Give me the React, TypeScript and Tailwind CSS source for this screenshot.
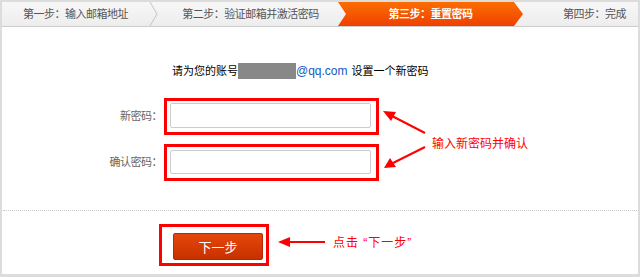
import React from "react";

function Separator() {
  return (
    <svg width="12" height="24" viewBox="0 0 12 24" className="shrink-0">
      <polyline points="1,0 8,12 1,24" fill="none" stroke="#c4c4c4" strokeWidth="1" />
    </svg>
  );
}

export default function App() {
  return (
    <div className="relative w-[640px] h-[277px] bg-[#dcdcdc] pt-[2px] px-[2px] pb-[3px] flex flex-col font-['Liberation_Sans','Noto_Sans_CJK_SC',sans-serif]">
      {/* Step bar */}
      <div className="h-[25px] flex items-stretch bg-gradient-to-b from-[#f7f7f7] to-[#ededed] border-b border-[#cdcdcd] text-[11px] tracking-[-0.5px] text-[#555]">
        <div className="w-[147px] flex items-center justify-center">第一步：输入邮箱地址</div>
        <Separator />
        <div className="w-[177px] flex items-center justify-center pl-[2px]">第二步：验证邮箱并激活密码</div>
        <div className="w-[185px] flex items-center justify-center bg-gradient-to-b from-[#fb6d00] to-[#ef3e00] text-white font-bold [clip-path:polygon(0_0,calc(100%_-_9px)_0,100%_50%,calc(100%_-_9px)_100%,0_100%,8px_50%)]">
          第三步：重置密码
        </div>
        <div className="flex-1 flex items-center pl-[40px]">第四步：完成</div>
      </div>

      {/* Content */}
      <div className="flex-1 bg-white flex flex-col">
        <div className="mt-[36px] pl-[170px] h-[16px] flex items-center text-[11px] text-black">
          <span>请为您的账号</span>
          <span className="inline-block w-[58px] h-[16px] bg-[#888888]" />
          <span className="text-[#1558c0] text-[12px]">@qq.com</span>
          <span className="ml-[4px]">设置一个新密码</span>
        </div>

        <div className="mt-[19px] flex items-center">
          <div className="w-[160px] text-right text-[11px] tracking-[-0.5px] text-[#666]">新密码：</div>
          <div className="ml-[2px] w-[215px] h-[37px] border-[3px] border-[#ff0000] pl-[3px] pr-[5px] pt-[2px] pb-[4px]">
            <input className="w-full h-full border border-[#cccccc] rounded-[2px] bg-white outline-none" type="password" />
          </div>
        </div>

        <div className="mt-[9px] flex items-center">
          <div className="w-[160px] text-right text-[11px] tracking-[-0.5px] text-[#666]">确认密码：</div>
          <div className="ml-[2px] w-[215px] h-[37px] border-[3px] border-[#ff0000] pl-[3px] pr-[5px] pt-[3px] pb-[4px]">
            <input className="w-full h-full border border-[#cccccc] rounded-[2px] bg-white outline-none" type="password" />
          </div>
        </div>

        <div className="mt-[29px] mx-[1px] border-t border-dotted border-[#c8c8c8]" />

        <div className="mt-[13px] ml-[157px] w-[110px] h-[42px] border-[3px] border-[#ff0000] pl-[11px] pt-[6px]">
          <button className="w-[90px] h-[27px] rounded-[2px] border border-[#b32a00] bg-gradient-to-b from-[#e5470b] to-[#c83000] text-white text-[13px] flex items-center justify-center font-['Noto_Sans_CJK_SC',sans-serif]">
            下一步
          </button>
        </div>
      </div>

      {/* Annotations */}
      <svg className="absolute left-0 top-0 pointer-events-none" width="640" height="277" viewBox="0 0 640 277">
        <line x1="425" y1="133" x2="392" y2="116" stroke="#ff0000" strokeWidth="2" />
        <polygon points="383,111 396,112 391,121" fill="#ff0000" />
        <line x1="425" y1="147" x2="393" y2="163" stroke="#ff0000" strokeWidth="2" />
        <polygon points="384,168 390,158 396,167" fill="#ff0000" />
        <line x1="325" y1="242" x2="288" y2="242" stroke="#ff0000" strokeWidth="2" />
        <polygon points="278,242 290,237 290,247" fill="#ff0000" />
      </svg>
      <div className="absolute left-[432px] top-[134px] text-[12px] leading-[18px] text-[#ff0000] font-['Noto_Sans_CJK_SC',sans-serif]">
        输入新密码并确认
      </div>
      <div className="absolute left-[333px] top-[234px] text-[12px] leading-[18px] tracking-[1px] text-[#ff0000]">
        点击 “下一步”
      </div>
    </div>
  );
}
